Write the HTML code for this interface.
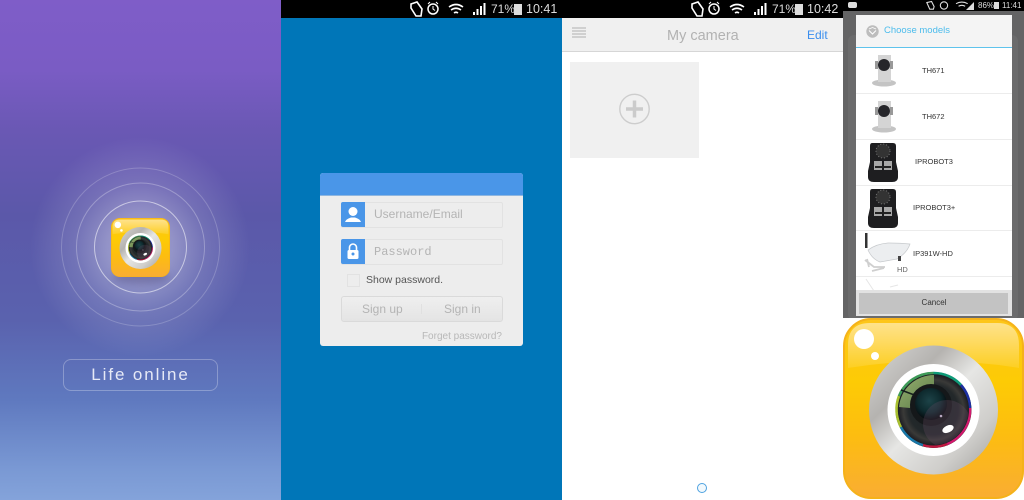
<!DOCTYPE html>
<html><head><meta charset="utf-8">
<style>
html,body{margin:0;padding:0;width:1024px;height:500px;overflow:hidden;background:#fff;font-family:"Liberation Sans",sans-serif}
.a{position:absolute}
#root{position:relative;width:1024px;height:500px;overflow:hidden}
.t{position:absolute;white-space:nowrap;line-height:1}
.row{position:absolute;left:0;width:156px;height:1px;background:#ececec}
</style></head><body><div id="root">
<svg width="0" height="0" style="position:absolute">
<defs>
<linearGradient id="ib" x1="0" y1="0" x2="0" y2="1"><stop offset="0" stop-color="#fdc61a"/><stop offset=".35" stop-color="#fdcb05"/><stop offset=".65" stop-color="#fdbd10"/><stop offset="1" stop-color="#f9ad33"/></linearGradient>
<linearGradient id="ih" x1="0" y1="0" x2="0" y2="1"><stop offset="0" stop-color="#fff" stop-opacity=".5"/><stop offset="1" stop-color="#fff" stop-opacity=".1"/></linearGradient>
<linearGradient id="ir" x1="0" y1="0" x2="1" y2="1"><stop offset="0" stop-color="#d8d8d6"/><stop offset=".3" stop-color="#b5b3b0"/><stop offset=".5" stop-color="#e6e6e4"/><stop offset=".75" stop-color="#cfcecb"/><stop offset="1" stop-color="#9f9d9a"/></linearGradient>
<radialGradient id="il" cx=".5" cy=".5" r=".5"><stop offset="0" stop-color="#1a2224"/><stop offset=".7" stop-color="#23282a"/><stop offset=".85" stop-color="#3a3a38"/><stop offset="1" stop-color="#1d1d22"/></radialGradient>
<radialGradient id="ip" cx=".45" cy=".4" r=".6"><stop offset="0" stop-color="#1d4348"/><stop offset=".6" stop-color="#0e2a2e"/><stop offset="1" stop-color="#06090c"/></radialGradient>
<linearGradient id="iw" x1="0" y1="0" x2="1" y2="1"><stop offset="0" stop-color="#96b070"/><stop offset="1" stop-color="#5d7c48"/></linearGradient>
<clipPath id="lc"><circle cx="90.500" cy="92" r="35"/></clipPath>
<symbol id="app" viewBox="0 0 181 181">
<rect x="1" y="1" width="179" height="179" rx="27" fill="url(#ib)" stroke="#f5b21a" stroke-width="2"/>
<path d="M5 50V27Q5 5 27 5H154Q176 5 176 27V50Q91 36 5 50Z" fill="url(#ih)"/>
<circle cx="21" cy="21" r="10" fill="#fff"/><circle cx="32" cy="38" r="4" fill="#fff"/>
<circle cx="90.500" cy="92" r="64.500" fill="url(#ir)"/>
<circle cx="90.500" cy="92" r="46" fill="#fff"/>
<circle cx="90.500" cy="92" r="38" fill="#222"/>
<g fill="none" stroke-width="2.600">
<path d="M90.500 55A37 37 0 0 1 118 67" stroke="#0f9a78"/>
<path d="M118 67A37 37 0 0 1 127 90" stroke="#1c2fa0"/>
<path d="M127 90A37 37 0 0 1 104 126" stroke="#d2186c"/>
<path d="M104 126A37 37 0 0 1 80 127" stroke="#c01840"/>
<path d="M80 127A37 37 0 0 1 58 109" stroke="#1878a8"/>
<path d="M58 109A37 37 0 0 1 56 78" stroke="#a8c030"/>
<path d="M56 78A37 37 0 0 1 90.500 55" stroke="#3f9a58"/>
</g>
<circle cx="90.500" cy="92" r="35.500" fill="url(#il)"/>
<path d="M91 57A35 35 0 0 0 56 89L67 90A24 24 0 0 1 91 68Z" fill="url(#iw)"/>
<path d="M58 72L74 78" stroke="#16201c" stroke-width="1.500"/>
<circle cx="88" cy="87" r="21" fill="#15181a"/>
<circle cx="88" cy="86" r="16" fill="url(#ip)"/>
<circle cx="104" cy="106" r="24" fill="#6a5068" opacity=".28" clip-path="url(#lc)"/>
<ellipse cx="105" cy="111" rx="6" ry="3.500" fill="#fff" transform="rotate(-25 105 111)"/>
<circle cx="98" cy="98" r="1.300" fill="#b8a8c0"/>
</symbol>
<symbol id="st" viewBox="0 0 148 18">
<path d="M3 4l6-2 5 7-1 7-5 0-5-8z" fill="none" stroke="#fff" stroke-width="1.600"/>
<circle cx="25" cy="9" r="5" fill="none" stroke="#fff" stroke-width="1.500"/><path d="M25 6v3l2 1.500M20 4l2-2M30 4l-2-2" stroke="#fff" fill="none"/>
<path d="M41 7q7-5 14 0M43 10q5-3.500 10 0M46 13q2-1.500 4 0" fill="none" stroke="#fff" stroke-width="1.600"/>
<path d="M65 15h2v-3h-2zM68.500 15h2v-6h-2zM72 15h2v-9h-2zM75.500 15h2v-12h-2z" fill="#fff"/>
</symbol>
</defs></svg>

<!-- Panel 1 -->
<div class="a" style="left:0;top:0;width:281px;height:500px;background:linear-gradient(180deg,#7f5dc8 0,#7a5cc4 70px,#6a58b4 130px,#5b58a9 215px,#5a62ae 320px,#5f79bf 400px,#7a99d4 470px,#84a3da 500px)"></div>
<div class="a" style="left:30px;top:137px;width:220px;height:220px;border-radius:50%;background:radial-gradient(closest-side,rgba(255,255,255,.42) 0,rgba(255,255,255,.34) 30%,rgba(255,255,255,.14) 60%,rgba(255,255,255,0) 100%)"></div>
<svg class="a" style="left:0;top:150px" width="281" height="200"><g fill="none" stroke="#fff"><circle cx="140.500" cy="97" r="46" stroke-opacity=".55"/><circle cx="140.500" cy="97" r="64" stroke-opacity=".28"/><circle cx="140.500" cy="97" r="79" stroke-opacity=".2"/></g></svg>
<div class="a" style="left:113px;top:270px;width:56px;height:14px;border-radius:50%;background:rgba(60,55,110,.35);filter:blur(4px)"></div>
<svg class="a" style="left:111px;top:218px" width="59" height="59"><use href="#app" width="59" height="59"/></svg>
<div class="a" style="left:63px;top:359px;width:153px;height:30px;border:1px solid rgba(255,255,255,.28);border-radius:8px"></div>
<div class="t" style="left:63px;width:155px;text-align:center;top:366px;font-size:17px;letter-spacing:1.900px;color:#e6e9f6">Life online</div>

<!-- Panel 2 -->
<div class="a" style="left:281px;top:0;width:281px;height:500px;background:#0076b8"></div>
<div class="a" style="left:281px;top:0;width:281px;height:18px;background:#000"></div>
<svg class="a" style="left:408px;top:0" width="148" height="18"><use href="#st" width="148" height="18"/></svg>
<div class="t" style="left:491px;top:3px;font-size:12px;color:#ddd">71%</div>
<div class="a" style="left:514px;top:4px;width:8px;height:11px;background:#ddd"></div>
<div class="t" style="left:526px;top:3px;font-size:12.500px;color:#ddd">10:41</div>
<div class="a" style="left:320px;top:173px;width:203px;height:173px;background:#ededed;border-radius:3px;overflow:hidden">
  <div class="a" style="left:0;top:0;width:203px;height:22px;background:#4a96e8;border-bottom:1px solid #8fb6df"></div>
  <div class="a" style="left:21px;top:29px;width:160px;height:24px;background:#ededed;border:1px solid #e2e2e2;border-radius:2px"></div>
  <div class="a" style="left:21px;top:29px;width:24px;height:25px;background:#4a96e8;border-radius:2px 0 0 2px"></div>
  <svg class="a" style="left:21px;top:29px" width="24" height="25"><circle cx="12" cy="9.500" r="4.500" fill="#fff"/><path d="M4 20q1-3 6-4.500h4q5 1.500 6 4.500z" fill="#fff"/></svg>
  <div class="t" style="left:54px;top:35px;font-size:12px;color:#b4b4b4">Username/Email</div>
  <div class="a" style="left:21px;top:66px;width:160px;height:24px;background:#ededed;border:1px solid #e2e2e2;border-radius:2px"></div>
  <div class="a" style="left:21px;top:66px;width:24px;height:25px;background:#4a96e8;border-radius:2px 0 0 2px"></div>
  <svg class="a" style="left:21px;top:66px" width="24" height="25"><path d="M8.500 11V8.500a3.500 3.500 0 0 1 7 0V11" fill="none" stroke="#fff" stroke-width="1.600"/><rect x="6.500" y="11" width="11" height="9" rx="1.500" fill="#fff"/><circle cx="12" cy="15" r="1.500" fill="#4a96e8"/></svg>
  <div class="t" style="left:54px;top:73px;font-size:12px;color:#b4b4b4;font-family:'Liberation Mono',monospace">Password</div>
  <div class="a" style="left:27px;top:101px;width:11px;height:11px;border:1px solid #e2e2e2"></div>
  <div class="t" style="left:46px;top:102px;font-size:10.500px;color:#555">Show password.</div>
  <div class="a" style="left:21px;top:123px;width:160px;height:24px;border:1px solid #dadada;border-radius:3px;background:linear-gradient(#efefef,#e4e4e4)"></div>
  <div class="a" style="left:101px;top:131px;width:1px;height:10px;background:#e0e0e0"></div>
  <div class="t" style="left:42px;top:130px;font-size:12px;color:#b4b4b4">Sign up</div>
  <div class="t" style="left:124px;top:130px;font-size:12px;color:#b4b4b4">Sign in</div>
  <div class="t" style="right:21px;top:159px;font-size:10px;color:#b8b8b8">Forget password?</div>
</div>

<!-- Panel 3 -->
<div class="a" style="left:562px;top:0;width:281px;height:500px;background:#fff"></div>
<div class="a" style="left:562px;top:0;width:281px;height:18px;background:#000"></div>
<svg class="a" style="left:689px;top:0" width="148" height="18"><use href="#st" width="148" height="18"/></svg>
<div class="t" style="left:772px;top:3px;font-size:12px;color:#ddd">71%</div>
<div class="a" style="left:795px;top:4px;width:8px;height:11px;background:#ddd"></div>
<div class="t" style="left:807px;top:3px;font-size:12.500px;color:#ddd">10:42</div>
<div class="a" style="left:562px;top:18px;width:281px;height:33px;background:#f0f0f0;border-bottom:1px solid #d6d6d6"></div>
<svg class="a" style="left:572px;top:27px" width="14" height="13"><path d="M0 1h14M0 4h14M0 7h14M0 10h14" stroke="#bdbdbd" stroke-width="1.300"/></svg>
<div class="t" style="left:667px;top:29px;font-size:14.500px;color:#b2b2b2">My camera</div>
<div class="t" style="left:807px;top:29px;font-size:12px;color:#3a8eee">Edit</div>
<div class="a" style="left:570px;top:62px;width:129px;height:96px;background:#f0f0f0"></div>
<svg class="a" style="left:618px;top:93px" width="33" height="33"><circle cx="16.500" cy="16" r="14.700" fill="none" stroke="#cdcdcd" stroke-width="1.400"/><path d="M16.500 7.500v17M8 16h17" stroke="#cbcbcb" stroke-width="3.500"/></svg>
<div class="a" style="left:697px;top:483px;width:8px;height:8px;border:1px solid #4ea2e0;border-radius:50%;background:#f2f9fd"></div>

<!-- Panel 4 -->
<div class="a" style="left:843px;top:0;width:181px;height:320px;background:#646465"></div>
<div class="a" style="left:848px;top:35px;width:170px;height:285px;background:#6b6b6c;border-radius:6px"></div>
<div class="a" style="left:843px;top:0;width:181px;height:11px;background:#000"></div>
<div class="a" style="left:848px;top:2px;width:9px;height:6px;background:#ddd;border-radius:2px"></div>
<svg class="a" style="left:925px;top:0" width="54" height="11" viewBox="0 0 148 30"><g fill="none" stroke="#ddd" stroke-width="3"><path d="M5 7l13-3 7 14-2 7-10 0z"/><circle cx="52" cy="15" r="10"/><path d="M85 10q16-9 32 0M92 17q9-5 18 0"/></g></svg>
<svg class="a" style="left:966px;top:1px" width="9" height="9"><path d="M0 9L8 1V9z" fill="#ddd"/></svg>
<div class="t" style="left:978px;top:2px;font-size:8px;color:#ddd">86%</div>
<div class="a" style="left:994px;top:2px;width:5px;height:7px;background:#ddd"></div>
<div class="t" style="left:1002px;top:2px;font-size:8px;color:#ddd">11:41</div>
<div class="a" style="left:856px;top:15px;width:156px;height:301px;background:#fff;overflow:hidden">
  <div class="a" style="left:0;top:0;width:156px;height:32px;background:#f4f4f4;border-bottom:1px solid #5ec3ec"></div>
  <svg class="a" style="left:10px;top:10px" width="13" height="13"><circle cx="6.500" cy="6.500" r="6.200" fill="#bdbdbd"/><path d="M3 5.500l3.500 3.500 3.500-3.500" fill="none" stroke="#fff"/><path d="M3 4l3.500-1.500L10 4" fill="none" stroke="#fff" stroke-width=".8"/></svg>
  <div class="t" style="left:28px;top:11px;font-size:9.500px;color:#4cbcec">Choose models</div>
  <div class="row" style="top:78px"></div><div class="row" style="top:124px"></div><div class="row" style="top:170px"></div><div class="row" style="top:215px"></div><div class="row" style="top:261px"></div>
  <div class="t" style="left:66px;top:52px;font-size:7.500px;color:#333">TH671</div>
  <div class="t" style="left:66px;top:98px;font-size:7.500px;color:#333">TH672</div>
  <div class="t" style="left:59px;top:143px;font-size:7.500px;color:#333">IPROBOT3</div>
  <div class="t" style="left:57px;top:189px;font-size:7.500px;color:#333">IPROBOT3+</div>
  <div class="t" style="left:57px;top:235px;font-size:7.500px;color:#333">IP391W-HD</div>
  <div class="t" style="left:41px;top:251px;font-size:7.500px;color:#666">HD</div>
  <!-- white cams -->
  <svg class="a" style="left:14px;top:37px" width="30" height="40"><ellipse cx="14" cy="31" rx="12" ry="3.500" fill="#c4c4c4"/><rect x="8" y="3" width="13" height="27" fill="#d4d4d4"/><circle cx="14" cy="13" r="6" fill="#26262a"/><rect x="5" y="9" width="3" height="8" fill="#999"/><rect x="20" y="9" width="3" height="8" fill="#999"/></svg>
  <svg class="a" style="left:14px;top:83px" width="30" height="40"><ellipse cx="14" cy="31" rx="12" ry="3.500" fill="#c4c4c4"/><rect x="8" y="3" width="13" height="27" fill="#d4d4d4"/><circle cx="14" cy="13" r="6" fill="#26262a"/><rect x="5" y="9" width="3" height="8" fill="#999"/><rect x="20" y="9" width="3" height="8" fill="#999"/></svg>
  <!-- black cams -->
  <svg class="a" style="left:11px;top:127px" width="34" height="42"><path d="M5 1h21q3 0 3 3v16l2 9v6q0 5-6 5H7q-6 0-6-5v-6l2-9V4q0-3 2-3z" fill="#1e1e20"/><circle cx="16" cy="9" r="7" fill="#333" stroke="#777" stroke-dasharray="1 2"/><rect x="7" y="19" width="8" height="9" fill="#a8a8a8"/><rect x="17" y="19" width="8" height="9" fill="#a8a8a8"/><rect x="8" y="24" width="16" height="2" fill="#222"/></svg>
  <svg class="a" style="left:11px;top:173px" width="34" height="42"><path d="M5 1h21q3 0 3 3v16l2 9v6q0 5-6 5H7q-6 0-6-5v-6l2-9V4q0-3 2-3z" fill="#1e1e20"/><circle cx="16" cy="9" r="7" fill="#333" stroke="#777" stroke-dasharray="1 2"/><rect x="7" y="19" width="8" height="9" fill="#a8a8a8"/><rect x="17" y="19" width="8" height="9" fill="#a8a8a8"/><rect x="8" y="24" width="16" height="2" fill="#222"/></svg>
  <!-- outdoor cam -->
  <svg class="a" style="left:6px;top:218px" width="50" height="42"><rect x="3" y="0" width="2.500" height="15" fill="#333"/><path d="M6 17q8-6 20-7 12 0 22 1-3 9-13 15l-17 3q-8-3-12-12z" fill="#eceef0" stroke="#c6c9cc" stroke-width=".7"/><rect x="36" y="23" width="3" height="5" fill="#444"/><path d="M3 27l9 7 11 0M5 26l2 8M10 38l12-3" stroke="#cfcfcf" stroke-width="1.800" fill="none"/></svg>
  <svg class="a" style="left:6px;top:262px" width="50" height="14"><path d="M4 2l8 12M28 10l8-2" stroke="#e6e6e6" fill="none"/></svg>
  <div class="a" style="left:0;top:275px;width:156px;height:26px;background:#e2e2e2"></div>
  <div class="a" style="left:3px;top:278px;width:149px;height:21px;background:#c3c3c3"></div>
  <div class="t" style="left:0;width:156px;text-align:center;top:284px;font-size:8px;color:#333">Cancel</div>
</div>

<!-- Big icon -->
<div class="a" style="left:843px;top:318px;width:181px;height:182px;background:#fff"></div>
<svg class="a" style="left:843px;top:318px" width="181" height="181"><use href="#app" width="181" height="181"/></svg>
</div></body></html>
